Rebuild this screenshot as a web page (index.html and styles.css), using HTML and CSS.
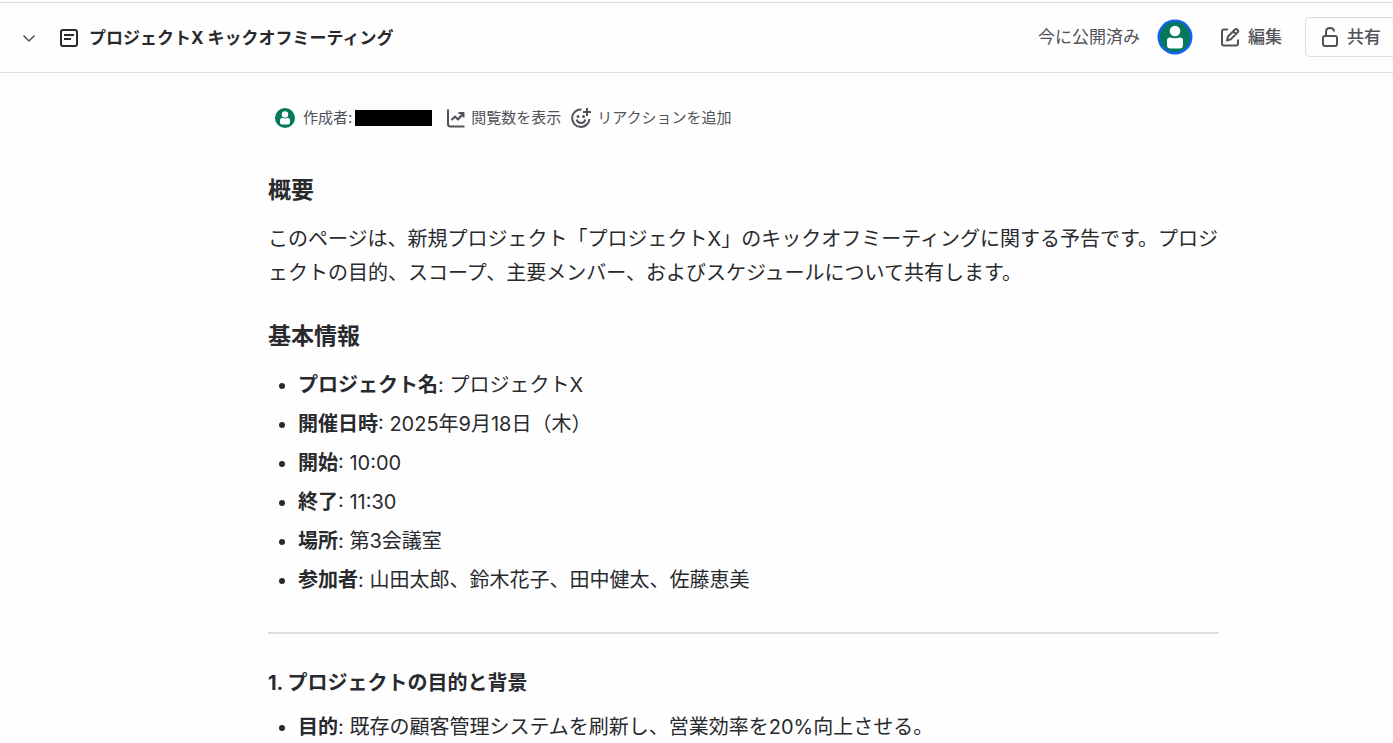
FILE: index.html
```html
<!DOCTYPE html>
<html lang="ja">
<head>
    <meta charset="UTF-8">
    <meta name="viewport" content="width=device-width, initial-scale=1.0">
    <title>プロジェクトX キックオフミーティング</title>
    <link rel="stylesheet" href="styles.css">
</head>
<body>
    <header class="topbar">
        <button class="toggle" type="button" aria-label="展開">
            <svg width="14" height="14" viewBox="0 0 14 14"><path d="M1.5 4.5 7 10l5.500-5.500"/></svg>
        </button>
        <svg class="page-icon" width="20" height="20" viewBox="0 0 20 20"><rect x="2" y="2" width="16" height="16" rx="2"/><path d="M5 7h10M5 11h7"/></svg>
        <h1>プロジェクトX キックオフミーティング</h1>
        <div class="actions">
            <span class="status">今に公開済み</span>
            <svg class="avatar" width="36" height="36" viewBox="0 0 36 36"><circle class="ring" cx="18" cy="18" r="17.500"/><circle class="face" cx="18" cy="18" r="15"/><circle class="person" cx="18" cy="12" r="5.300"/><path class="person" d="M13 18.500Q18 20 23 18.500Q26 18.500 26 21.500V26Q26 29.500 22.500 29.500H13.500Q10 29.500 10 26V21.500Q10 18.500 13 18.500Z"/></svg>
            <button class="edit" type="button">
                <svg width="20" height="20" viewBox="0 0 20 20"><path d="M8 2.500H4Q2 2.500 2 4.500V16.500Q2 18.500 4 18.500H16Q18 18.500 18 16.500V12.500M7 13.500 8 9.500 15 2.500Q16.200 1.500 17.500 2.700T17.700 5.300L10.700 12.400ZM13.200 4.500 16 7.200"/></svg>
                編集
            </button>
            <button class="share" type="button">
                <svg width="18" height="22" viewBox="0 0 18 22"><rect x="2" y="10" width="14" height="10" rx="2"/><path d="M5 10V6Q5 2 9 2T13 5.500"/></svg>
                共有
            </button>
        </div>
    </header>

    <main class="page">
        <div class="meta">
            <span class="author">
                <svg class="avatar" width="20" height="20" viewBox="0 0 36 36"><circle class="face" cx="18" cy="18" r="18"/><circle class="person" cx="18" cy="11.500" r="5.800"/><path class="person" d="M13 18Q18 19.500 23 18Q27 18 27 21.500V26Q27 29.500 23.500 29.500H12.500Q9 29.500 9 26V21.500Q9 18 13 18Z"/></svg>
                作成者:<span class="masked"></span>
            </span>
            <button type="button">
                <svg width="20" height="20" viewBox="0 0 20 20"><path d="M2 1.500V16Q2 18.500 4.500 18.500H18.500M5.500 12 9 8.500l3 3 5-6M12.500 5H17.500V9.500"/></svg>
                閲覧数を表示
            </button>
            <button type="button">
                <svg width="22" height="22" viewBox="0 0 22 22"><path d="M11.500 2.500A8.700 8.700 0 1 0 19.500 12M17 1v8M13 5h8M6.500 12.500Q7.500 16 11 16T15.300 12.500"/><circle class="eye" cx="8" cy="9.500" r="1.500"/><circle class="eye" cx="13.500" cy="9.500" r="1.500"/></svg>
                リアクションを追加
            </button>
        </div>

        <section>
            <h2>概要</h2>
            <p>このページは、新規プロジェクト「プロジェクトX」のキックオフミーティングに関する予告です。プロジェクトの目的、スコープ、主要メンバー、およびスケジュールについて共有します。</p>
        </section>

        <section>
            <h2>基本情報</h2>
            <ul>
                <li><strong>プロジェクト名</strong>: プロジェクトX</li>
                <li><strong>開催日時</strong>: 2025年9月18日（木）</li>
                <li><strong>開始</strong>: 10:00</li>
                <li><strong>終了</strong>: 11:30</li>
                <li><strong>場所</strong>: 第3会議室</li>
                <li><strong>参加者</strong>: 山田太郎、鈴木花子、田中健太、佐藤恵美</li>
            </ul>
        </section>

        <hr>

        <section>
            <h3>1. プロジェクトの目的と背景</h3>
            <ul>
                <li><strong>目的</strong>: 既存の顧客管理システムを刷新し、営業効率を20%向上させる。</li>
            </ul>
        </section>
    </main>
</body>
</html>
```
FILE: styles.css
```css
* {
    box-sizing: border-box;
}

body {
    font-family: Inter, "Noto Sans CJK JP", sans-serif;
    margin: 0;
    height: 100vh;
    overflow: hidden;
    background-color: #fefefe;
    color: #292a2e;
    font-size: 20px;
    line-height: 34px;
}

svg {
    flex: none;
    fill: none;
    stroke: currentColor;
    stroke-width: 2;
    stroke-linejoin: round;
}

button {
    display: flex;
    align-items: center;
    padding: 0;
    border: 0;
    background: none;
    color: inherit;
    font: inherit;
    white-space: nowrap;
    cursor: pointer;
}

.topbar {
    display: flex;
    align-items: center;
    height: 71px;
    margin-top: 2px;
    padding-left: 22px;
    border-top: 1px solid #dddee1;
    border-bottom: 1px solid #dddee1;
    white-space: nowrap;
}

.toggle {
    color: #505258;
}

.toggle svg {
    stroke-width: 1.5;
}

.page-icon {
    margin-left: 23px;
}

.topbar h1 {
    margin: 0 0 0 10px;
    font-size: 17px;
    font-weight: 700;
}

.actions {
    display: flex;
    align-items: center;
    margin-left: auto;
    padding-bottom: 2px;
    color: #505258;
    font-size: 17px;
}

.avatar {
    stroke: none;
}

.actions .avatar {
    margin: 0 27px 0 17px;
}

.ring {
    fill: #1463e6;
}

.face {
    fill: #057a5b;
}

.person {
    fill: #fff;
}

.edit,
.share {
    gap: 8px;
    font-weight: 500;
}

.share {
    height: 40px;
    margin-left: 23px;
    padding: 0 12px 0 15px;
    border: 1px solid #dddee1;
    border-right: 0;
    border-radius: 5px 0 0 5px;
}

.page {
    padding: 34px 174px 0 268px;
}

.meta {
    display: flex;
    align-items: center;
    gap: 9px;
    padding-left: 7px;
    color: #505258;
    font-size: 15px;
    line-height: 22px;
}

.meta button {
    gap: 5px;
}

.author {
    display: flex;
    align-items: center;
    margin-right: 5px;
}

.author .avatar {
    margin-right: 8px;
}

.masked {
    width: 77px;
    height: 16px;
    margin-left: 3px;
    background-color: #000;
}

.eye {
    fill: currentColor;
    stroke: none;
}

h2 {
    margin: 32px 0 18px;
    font-size: 23px;
    line-height: 28px;
}

.meta + section h2 {
    margin-top: 47px;
}

h3 {
    margin: 35px 0 13px;
    font-size: 20px;
    line-height: 28px;
}

p {
    margin: 0;
    line-break: loose;
}

ul {
    margin: 0;
    padding-left: 30px;
}

li + li {
    margin-top: 5px;
}

hr {
    margin: 35px 0 0;
    border: 0;
    border-top: 2px solid #dddee1;
}
```
